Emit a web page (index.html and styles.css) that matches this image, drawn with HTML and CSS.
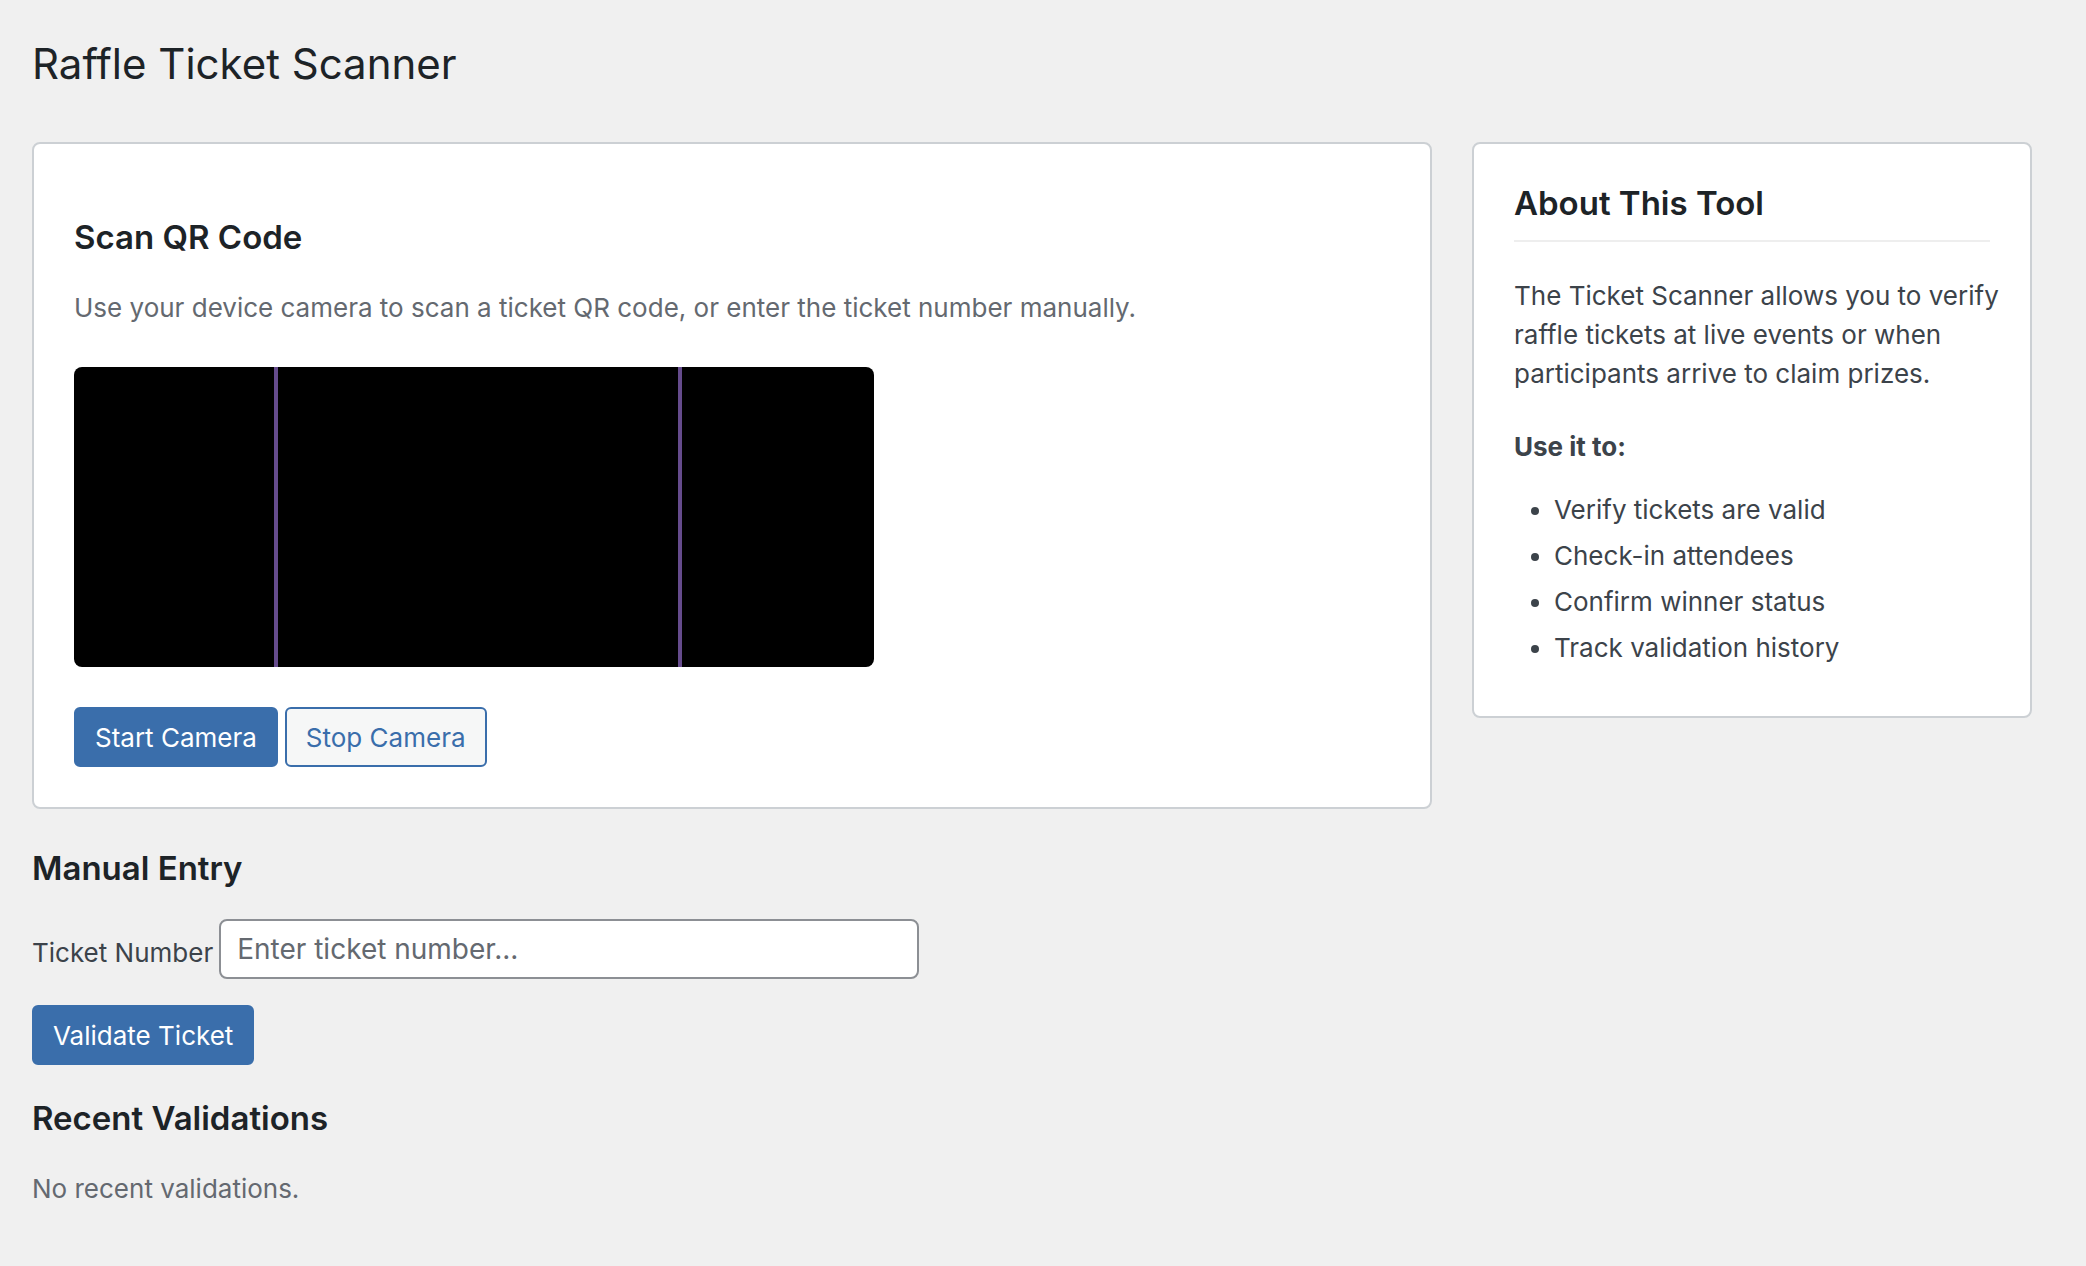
FILE: index.html
```html
<!DOCTYPE html>
<html lang="en">
<head>
    <meta charset="UTF-8">
    <title>Raffle Ticket Scanner</title>
    <link rel="stylesheet" href="styles.css">
</head>
<body>
    <div class="wrap">
        <h1>Raffle Ticket Scanner</h1>
        <div class="columns">
            <main class="main">
                <section class="card">
                    <h2>Scan QR Code</h2>
                    <p class="description">Use your device camera to scan a ticket QR code, or enter the ticket number manually.</p>
                    <div class="scanner">
                        <div class="scan-region"></div>
                    </div>
                    <div class="buttons">
                        <button type="button" class="button button-primary">Start Camera</button>
                        <button type="button" class="button">Stop Camera</button>
                    </div>
                </section>

                <form class="manual-entry">
                    <h2>Manual Entry</h2>
                    <div class="field">
                        <label for="ticket-number">Ticket Number</label>
                        <input type="text" id="ticket-number" placeholder="Enter ticket number...">
                    </div>
                    <button type="submit" class="button button-primary">Validate Ticket</button>
                </form>

                <section class="recent">
                    <h2>Recent Validations</h2>
                    <p class="description">No recent validations.</p>
                </section>
            </main>

            <aside class="card sidebar">
                <h2>About This Tool</h2>
                <p>The Ticket Scanner allows you to verify raffle tickets at live events or when participants arrive to claim prizes.</p>
                <p><strong>Use it to:</strong></p>
                <ul>
                    <li>Verify tickets are valid</li>
                    <li>Check-in attendees</li>
                    <li>Confirm winner status</li>
                    <li>Track validation history</li>
                </ul>
            </aside>
        </div>
    </div>
</body>
</html>
```
FILE: styles.css
```css
*{
    box-sizing: border-box;
}
body{
    margin: 0;
    background: #f0f0f0;
    color: #3c434a;
    font-family: Inter, "Liberation Sans", sans-serif;
    font-size: 26px;
    line-height: 39px;
}
h1, h2, p, ul{
    margin: 0;
}
h1, h2{
    color: #1d2327;
}
h1{
    margin-bottom: 48px;
    font-size: 42px;
    font-weight: 400;
    line-height: 60px;
}
h2{
    margin-bottom: 32px;
    font-size: 33px;
    font-weight: 600;
    line-height: 38px;
}
.wrap{
    padding: 34px 54px 34px 32px;
}
.columns{
    display: grid;
    grid-template-columns: 5fr 2fr;
    gap: 40px;
    align-items: start;
}
.card{
    padding: 40px;
    background: #fff;
    border: 2px solid #ccd0d4;
    border-radius: 8px;
}
.card .description{
    margin-bottom: 40px;
}
.main .card{
    padding-top: 74px;
}
.description{
    color: #646970;
}

/* camera preview */
.scanner{
    position: relative;
    max-width: 800px;
    height: 300px;
    margin-bottom: 40px;
    background: #000;
    border-radius: 8px;
    overflow: hidden;
}
.scan-region{
    position: absolute;
    top: 0;
    bottom: 0;
    left: 25%;
    width: 50%;
    box-sizing: content-box;
    border: solid #654b8c;
    border-width: 0 4px;
}

.buttons{
    display: flex;
    gap: 7px;
}
.button{
    height: 60px;
    padding: 0 19px;
    border: 2px solid #3a6eab;
    border-radius: 6px;
    background: #f6f7f7;
    color: #3a6eab;
    font: inherit;
    cursor: pointer;
}
.button-primary{
    background: #3a6eab;
    color: #fff;
}

.manual-entry{
    margin: 40px 0 34px;
}
.field{
    display: flex;
    align-items: flex-end;
    gap: 6px;
    margin-bottom: 26px;
}
.field label{
    padding-bottom: 7px;
}
.field input{
    width: 700px;
    height: 60px;
    padding: 0 16px;
    border: 2px solid #8c8f94;
    border-radius: 8px;
    background: #fff;
    color: #2c3338;
    font: inherit;
    font-size: 28px;
}
.field input::placeholder{
    color: #646970;
    opacity: 1;
}

/* sidebar */
.sidebar h2{
    margin-bottom: 34px;
    padding-bottom: 18px;
    border-bottom: 2px solid #eee;
}
.sidebar p{
    margin: 0 -16px 34px 0;
}
.sidebar p + p{
    margin-bottom: 26px;
}
.sidebar ul{
    padding-left: 40px;
}
.sidebar li{
    margin-bottom: 10px;
    line-height: 36px;
}
```
